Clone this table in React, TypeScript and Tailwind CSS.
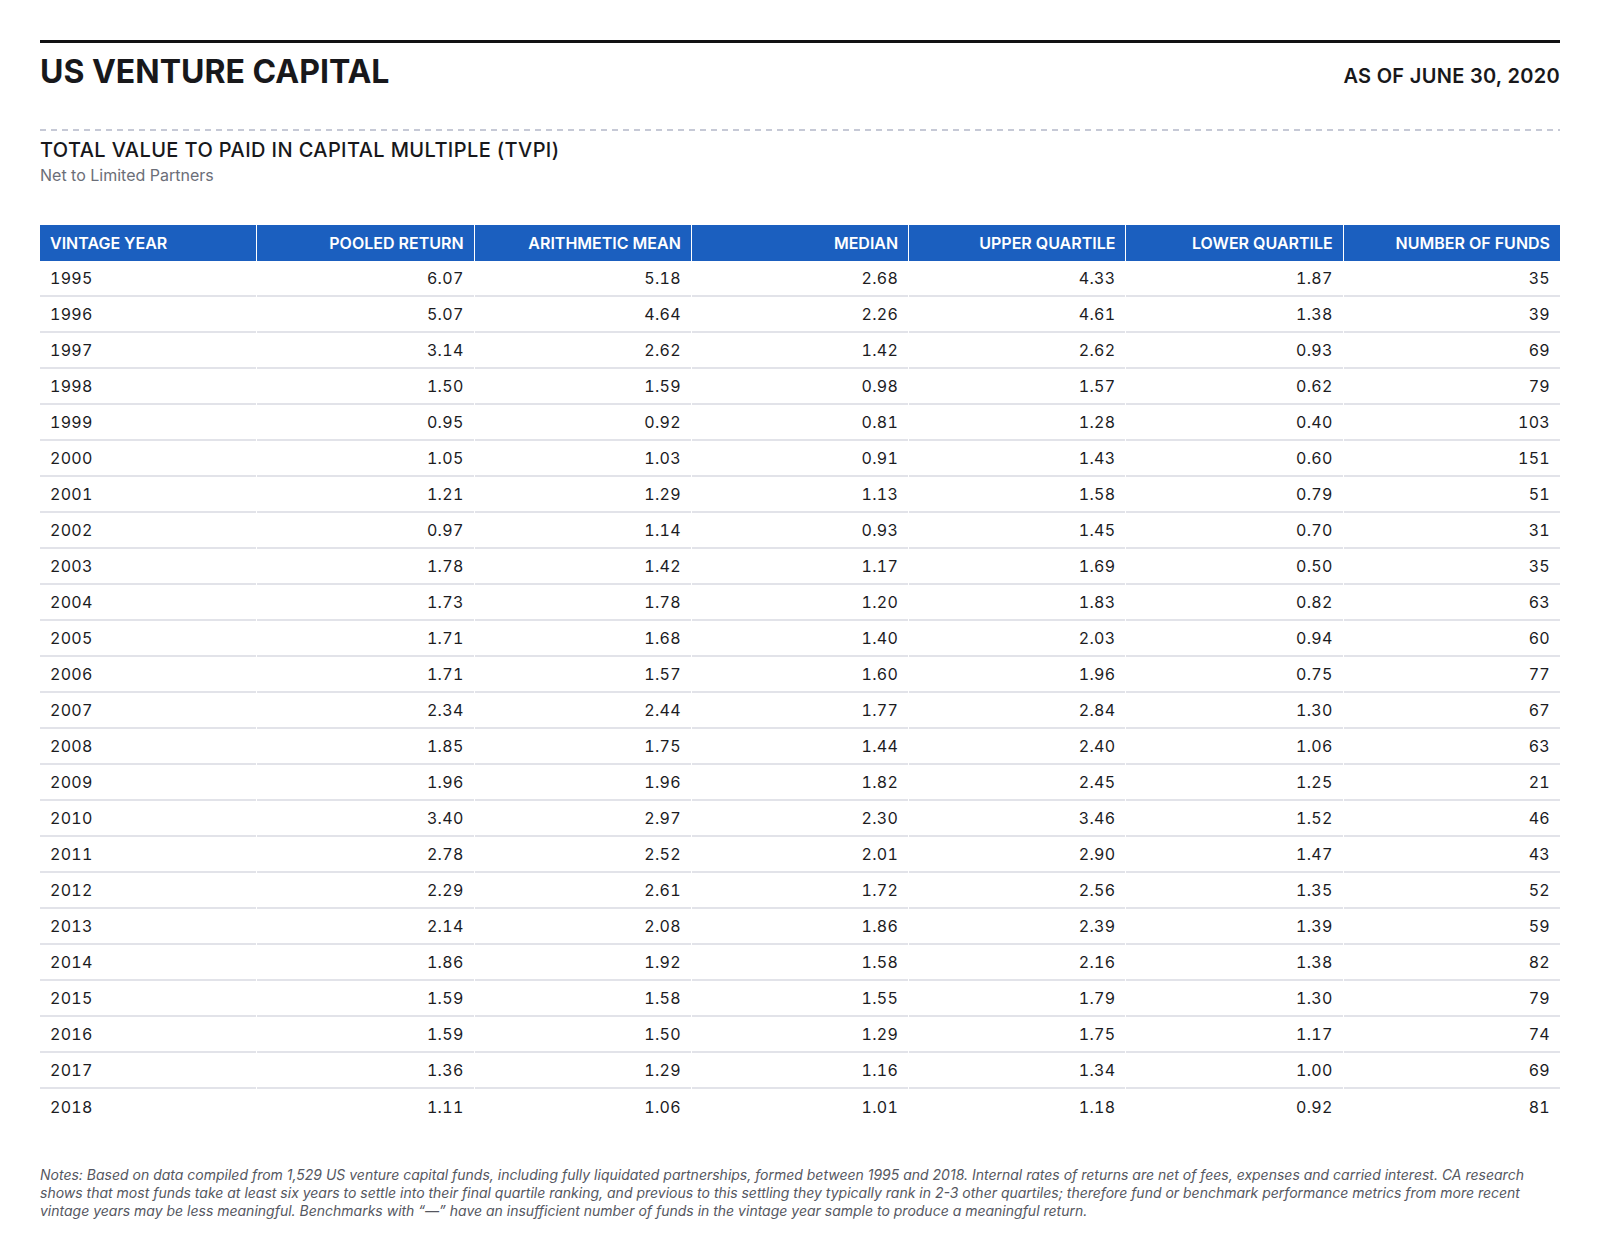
const headers = [
  "VINTAGE YEAR",
  "POOLED RETURN",
  "ARITHMETIC MEAN",
  "MEDIAN",
  "UPPER QUARTILE",
  "LOWER QUARTILE",
  "NUMBER OF FUNDS",
];

const rows: string[][] = [
  ["1995", "6.07", "5.18", "2.68", "4.33", "1.87", "35"],
  ["1996", "5.07", "4.64", "2.26", "4.61", "1.38", "39"],
  ["1997", "3.14", "2.62", "1.42", "2.62", "0.93", "69"],
  ["1998", "1.50", "1.59", "0.98", "1.57", "0.62", "79"],
  ["1999", "0.95", "0.92", "0.81", "1.28", "0.40", "103"],
  ["2000", "1.05", "1.03", "0.91", "1.43", "0.60", "151"],
  ["2001", "1.21", "1.29", "1.13", "1.58", "0.79", "51"],
  ["2002", "0.97", "1.14", "0.93", "1.45", "0.70", "31"],
  ["2003", "1.78", "1.42", "1.17", "1.69", "0.50", "35"],
  ["2004", "1.73", "1.78", "1.20", "1.83", "0.82", "63"],
  ["2005", "1.71", "1.68", "1.40", "2.03", "0.94", "60"],
  ["2006", "1.71", "1.57", "1.60", "1.96", "0.75", "77"],
  ["2007", "2.34", "2.44", "1.77", "2.84", "1.30", "67"],
  ["2008", "1.85", "1.75", "1.44", "2.40", "1.06", "63"],
  ["2009", "1.96", "1.96", "1.82", "2.45", "1.25", "21"],
  ["2010", "3.40", "2.97", "2.30", "3.46", "1.52", "46"],
  ["2011", "2.78", "2.52", "2.01", "2.90", "1.47", "43"],
  ["2012", "2.29", "2.61", "1.72", "2.56", "1.35", "52"],
  ["2013", "2.14", "2.08", "1.86", "2.39", "1.39", "59"],
  ["2014", "1.86", "1.92", "1.58", "2.16", "1.38", "82"],
  ["2015", "1.59", "1.58", "1.55", "1.79", "1.30", "79"],
  ["2016", "1.59", "1.50", "1.29", "1.75", "1.17", "74"],
  ["2017", "1.36", "1.29", "1.16", "1.34", "1.00", "69"],
  ["2018", "1.11", "1.06", "1.01", "1.18", "0.92", "81"],
];

export default function App() {
  return (
    <div className="min-h-screen w-full bg-white font-['Inter','Liberation_Sans',sans-serif] text-[#18181b]">
      <div className="mx-auto w-[1520px] pt-10">
        {/* Title bar */}
        <div className="border-t-[3px] border-[#111113] pt-[9px]">
          <div className="flex items-baseline justify-between">
            <h1 className="text-[32px] leading-[39px] font-bold">US VENTURE CAPITAL</h1>
            <div className="text-[20px] leading-6 font-semibold tracking-[0.3px]">
              AS OF JUNE 30, 2020
            </div>
          </div>
        </div>

        <div className="mt-[38px] h-[2px] bg-[repeating-linear-gradient(90deg,#c6c9d6_0px,#c6c9d6_6px,transparent_6px,transparent_11px)]" />

        <div className="pt-[7px]">
          <h2 className="text-[20px] leading-6 font-medium tracking-[0.4px]">
            TOTAL VALUE TO PAID IN CAPITAL MULTIPLE (TVPI)
          </h2>
          <p className="mt-[3px] text-[16px] leading-5 text-[#6b6e78]">Net to Limited Partners</p>
        </div>

        {/* Table */}
        <div className="mt-[40px]">
          <div className="grid grid-cols-7 gap-x-px bg-white">
            {headers.map((h, i) => (
              <div
                key={h}
                className={`flex h-9 items-center bg-[#1b5fbf] px-2.5 text-[16px] font-semibold text-white ${
                  i === 0 ? "justify-start" : "justify-end"
                }`}
              >
                {h}
              </div>
            ))}
          </div>
          {rows.map((r, ri) => (
            <div key={r[0]} className="grid grid-cols-7 gap-x-px">
              {r.map((c, ci) => (
                <div
                  key={ci}
                  className={`flex h-9 items-center px-2.5 text-[16px] tabular-nums tracking-[0.3px] text-[#1c1c1f] ${
                    ci === 0 ? "justify-start" : "justify-end"
                  } ${ri < rows.length - 1 ? "border-b-2 border-[#e2e3e9]" : ""}`}
                >
                  {c}
                </div>
              ))}
            </div>
          ))}
        </div>

        <p className="mt-[41px] text-[14px] leading-[18px] text-[#55575f] italic">
          Notes: Based on data compiled from 1,529 US venture capital funds, including fully liquidated
          partnerships, formed between 1995 and 2018. Internal rates of returns are net of fees, expenses
          and carried interest. CA research shows that most funds take at least six years to settle into
          their final quartile ranking, and previous to this settling they typically rank in 2-3 other
          quartiles; therefore fund or benchmark performance metrics from more recent vintage years may be
          less meaningful. Benchmarks with “—” have an insufficient number of funds in the vintage year
          sample to produce a meaningful return.
        </p>
      </div>
    </div>
  );
}
